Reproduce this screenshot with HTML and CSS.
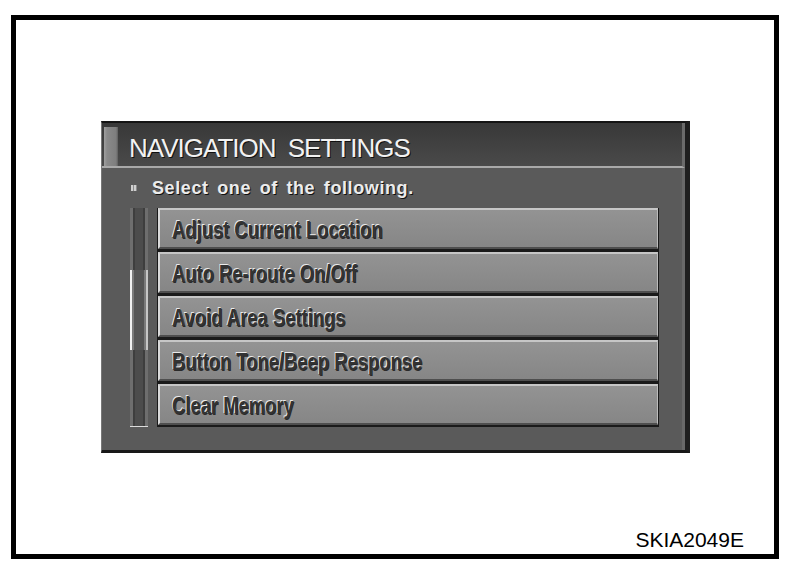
FILE: index.html
```html
<!DOCTYPE html>
<html>
<head>
<meta charset="utf-8">
<link rel="stylesheet" href="styles.css">
</head>
<body>
<div class="frame">
  <div class="panel">
    <div class="header">
      <span class="accent"></span>
      <h1 class="title">NAVIGATION SETTINGS</h1>
    </div>
    <div class="body">
      <div class="prompt"><span class="bullet"></span>Select one of the following.</div>
      <div class="list">
        <div class="track"><div class="thumb"></div></div>
        <div class="items">
          <div class="item"><span class="label">Adjust Current Location</span></div>
          <div class="item"><span class="label">Auto Re-route On/Off</span></div>
          <div class="item"><span class="label">Avoid Area Settings</span></div>
          <div class="item"><span class="label">Button Tone/Beep Response</span></div>
          <div class="item"><span class="label">Clear Memory</span></div>
        </div>
      </div>
    </div>
  </div>
  <div class="code">SKIA2049E</div>
</div>
</body>
</html>
```
FILE: styles.css
```css
html, body {
  margin: 0;
  padding: 0;
  background: #ffffff;
}

.frame {
  box-sizing: border-box;
  width: 768px;
  height: 544px;
  margin: 15px 0 0 11px;
  border: 5px solid #000;
  padding: 101px 0 0 85px;
  display: flex;
  flex-direction: column;
  font-family: "Liberation Sans", Arial, sans-serif;
}

.panel {
  box-sizing: border-box;
  width: 589px;
  height: 332px;
  display: flex;
  flex-direction: column;
  background: #5a5a5a;
  border-top: 2px solid #141414;
  border-left: 1px solid #787878;
  border-right: 5px solid #1e1e1e;
  border-bottom: 3px solid #181818;
}

.header {
  box-sizing: border-box;
  height: 45px;
  display: flex;
  align-items: stretch;
  background: linear-gradient(#383838, #4a4a4a);
  border-bottom: 2px solid #a9a9a9;
  border-right: 3px solid #6a6a6a;
}

.accent {
  width: 14px;
  margin: 4px 0 0 2px;
  background: linear-gradient(90deg, #a0a0a0 0, #8a8a8a 3px, #7e7e7e 12px, #5e5e5e 14px);
}

.title {
  margin: 0 0 0 11px;
  padding-top: 8px;
  font-size: 26px;
  line-height: 35px;
  font-weight: normal;
  letter-spacing: -1px;
  word-spacing: 6px;
  color: #f2f2f2;
  text-shadow: 1px 1px 0 #101010;
}

.body {
  flex: 1;
  padding: 11px 0 0 28px;
  border-right: 3px solid #686868;
}

.prompt {
  display: flex;
  align-items: center;
  font-size: 18px;
  line-height: 18px;
  font-weight: bold;
  letter-spacing: 0.6px;
  word-spacing: 3px;
  color: #ececec;
  text-shadow: 1px 1px 0 #111;
}

.bullet {
  width: 6px;
  height: 6px;
  margin: 0 15px 0 1px;
  background: repeating-linear-gradient(90deg, #cfcfcf 0 2px, #8a8a8a 2px 3px);
}

.list {
  margin-top: 11px;
  display: flex;
  gap: 9px;
}

.track {
  box-sizing: border-box;
  width: 18px;
  height: 219px;
  padding-top: 62px;
  background: linear-gradient(90deg, #6e6e6e 0 3px, #3e3e3e 3px 5px, #4c4c4c 5px 13px, #3e3e3e 13px 15px, #6e6e6e 15px);
  border-bottom: 1px solid #dcdcdc;
}

.thumb {
  box-sizing: border-box;
  height: 80px;
  border-left: 2px solid #f0f0f0;
  border-right: 2px solid #c6c6c6;
  background: linear-gradient(90deg, #7a7a7a 0 2px, #555 2px 12px, #7a7a7a 12px);
}

.items {
  width: 500px;
  padding: 0 1px;
  display: flex;
  flex-direction: column;
  gap: 3px;
  background: #1a1a1a;
}

.item {
  box-sizing: border-box;
  height: 41px;
  padding: 4px 0 0 12px;
  background: linear-gradient(#939393, #868686);
  border-top: 2px solid #c6c6c6;
  border-left: 2px solid #dadada;
  border-bottom: 2px solid #4e4e4e;
  border-right: 1px solid #bcbcbc;
  overflow: hidden;
}

.label {
  display: inline-block;
  font-size: 23px;
  line-height: 33px;
  font-weight: bold;
  color: #333333;
  white-space: nowrap;
  transform: scaleX(0.8);
  transform-origin: left center;
  text-shadow: -1px -1px 0 #ebebeb, 1px 1px 0 #2a2a2a;
}

.code {
  margin-top: auto;
  align-self: flex-end;
  margin-right: 30px;
  margin-bottom: 4px;
  font-size: 21px;
  line-height: 21px;
  color: #000;
}
```
